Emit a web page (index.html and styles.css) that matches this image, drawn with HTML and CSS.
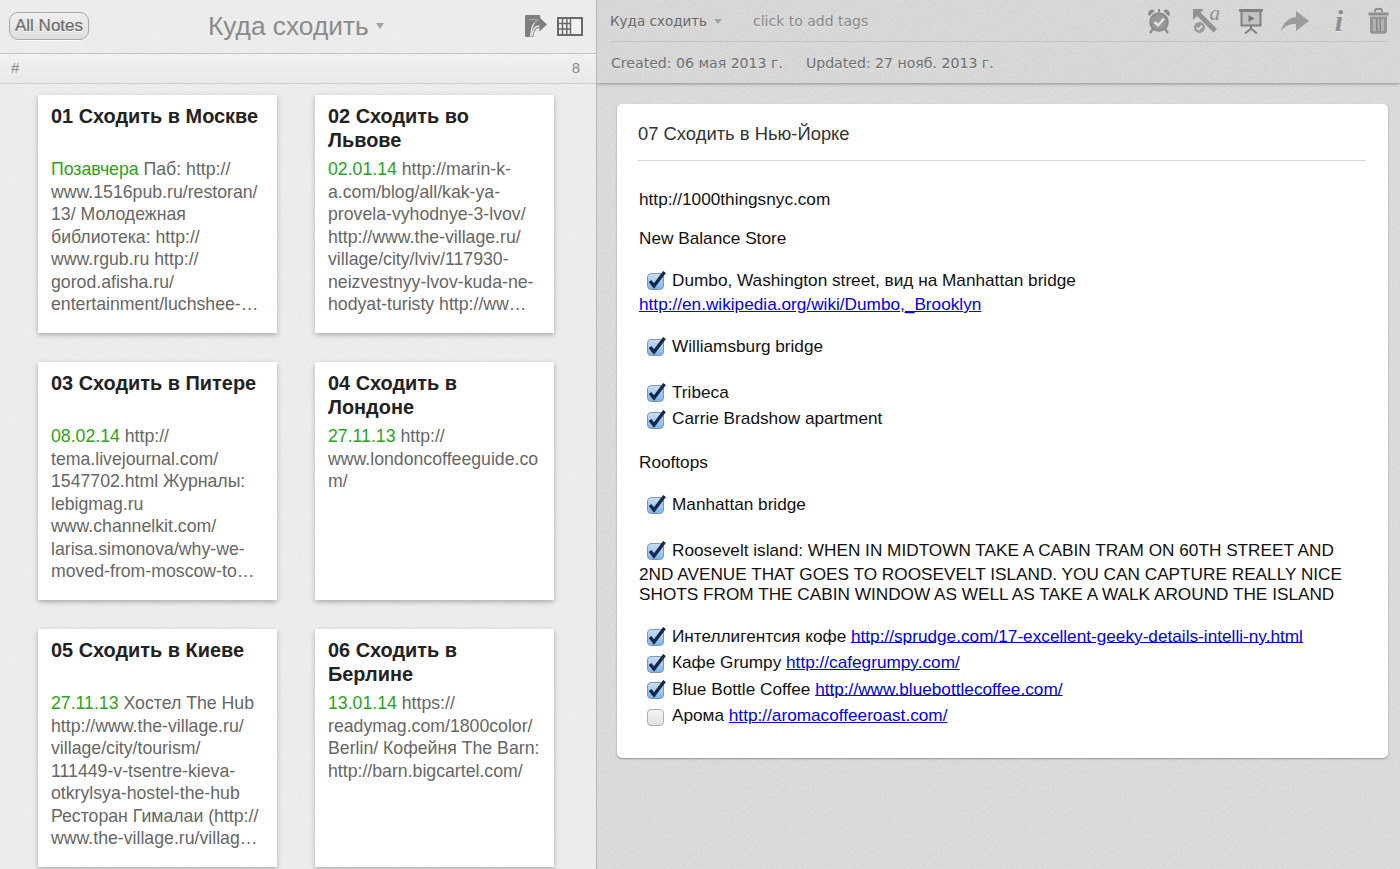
FILE: index.html
```html
<!DOCTYPE html>
<html lang="en">
<head>
    <meta charset="UTF-8">
    <title>Куда сходить</title>
    <link rel="stylesheet" href="styles.css">
</head>
<body>

<div class="app">
    <!-- Notes list -->
    <div class="list-pane">
        <div class="list-header">
            <button class="all-notes">All Notes</button>
            <div class="notebook-title">Куда сходить <span class="caret big"></span></div>
            <div class="list-icons">
                <svg width="23" height="22" viewBox="0 0 23 22"><path d="M1.500 0h12.500c.8 0 1.200.5 1.200 1.200V5c-4.500.5-8 3.500-9.200 9-.4 2.200-.7 4.500-.8 8H1.500C.6 22 0 21.400 0 20.500V1.500C0 .6.600 0 1.500 0z" fill="#7f7f7f"/><path d="M14.500 5V2.500L22 9.500l-7.500 7v-3.500c-3.500-.2-5.500 2.500-6 9h-2c0-9.500 3-16 8-17z" fill="#7f7f7f"/><path d="M4 4.500h8.500" stroke="#a8a8a8" stroke-width="1"/><path d="M7 21c.5-7 3-10 7.500-10" stroke="#ececec" stroke-width="1.500" fill="none"/></svg>
                <svg width="26" height="19" viewBox="0 0 26 19"><rect x="1" y="1" width="24" height="17" fill="#f1f1f1" stroke="#6a6a6a" stroke-width="2"/><path d="M1.500 6.500h12M1.500 12h12M5.500 1.500v16M9.800 1.500v16M13.500 1.500v16" stroke="#6a6a6a" stroke-width="1.500" fill="none"/></svg>
            </div>
        </div>
        <div class="list-subbar">
            <span>#</span>
            <span>8</span>
        </div>
        <div class="cards">
            <div class="card">
                <h2>01 Сходить в Москве</h2>
                <p><em>Позавчера</em> Паб: http://<br>www.1516pub.ru/restoran/<br>13/ Молодежная<br>библиотека: http://<br>www.rgub.ru http://<br>gorod.afisha.ru/<br>entertainment/luchshee-…</p>
            </div>
            <div class="card">
                <h2>02 Сходить во Львове</h2>
                <p><em>02.01.14</em> http://marin-k-<br>a.com/blog/all/kak-ya-<br>provela-vyhodnye-3-lvov/<br>http://www.the-village.ru/<br>village/city/lviv/117930-<br>neizvestnyy-lvov-kuda-ne-<br>hodyat-turisty http://ww…</p>
            </div>
            <div class="card">
                <h2>03 Сходить в Питере</h2>
                <p><em>08.02.14</em> http://<br>tema.livejournal.com/<br>1547702.html Журналы:<br>lebigmag.ru<br>www.channelkit.com/<br>larisa.simonova/why-we-<br>moved-from-moscow-to…</p>
            </div>
            <div class="card">
                <h2>04 Сходить в Лондоне</h2>
                <p><em>27.11.13</em> http://<br>www.londoncoffeeguide.co<br>m/</p>
            </div>
            <div class="card">
                <h2>05 Сходить в Киеве</h2>
                <p><em>27.11.13</em> Хостел The Hub<br>http://www.the-village.ru/<br>village/city/tourism/<br>111449-v-tsentre-kieva-<br>otkrylsya-hostel-the-hub<br>Ресторан Гималаи (http://<br>www.the-village.ru/villag…</p>
            </div>
            <div class="card">
                <h2>06 Сходить в Берлине</h2>
                <p><em>13.01.14</em> https://<br>readymag.com/1800color/<br>Berlin/ Кофейня The Barn:<br>http://barn.bigcartel.com/</p>
            </div>
        </div>
    </div>

    <!-- Note view -->
    <div class="note-pane">
        <div class="note-header">
            <div class="note-tools">
                <span class="notebook-name">Куда сходить <span class="caret"></span></span>
                <span class="tags">click to add tags</span>
                <div class="tool-icons">
                    <svg width="26" height="26" viewBox="0 0 26 26"><circle cx="13" cy="14" r="8.800" fill="#989898" stroke="#8a8a8a" stroke-width="2"/><path d="M2 6.500C2 3.500 4 1.500 7 1.500L8.500 3 3.500 8zM24 6.500c0-3-2-5-5-5L17.500 3l5 5z" fill="#8a8a8a"/><path d="M13 1v3" stroke="#8a8a8a" stroke-width="2"/><path d="M7 21l-3 4M19 21l3 4" stroke="#8a8a8a" stroke-width="2.200"/><path d="M8.500 14l3.500 3.500 6-7" stroke="#e2e2e2" stroke-width="2.500" fill="none"/></svg>
                    <span class="tool-move">
                        <svg width="26" height="26" viewBox="0 0 26 26"><path d="M1 1h11L8.500 4.500 25 21l-3.500 3.500L5 8 1 12z" fill="#939393"/><circle cx="7.500" cy="19.500" r="6" fill="#9c9c9c" stroke="#dadada"/><path d="M4.800 19.500l2 2 3.500-4" stroke="#e2e2e2" stroke-width="1.600" fill="none"/></svg>
                        <span class="a-glyph">a</span>
                    </span>
                    <svg class="tool-show" width="26" height="26" viewBox="0 0 26 26"><path d="M1 1h24v2.500H1z" fill="#808080"/><path d="M3.500 3h19v14.500h-19z" fill="#c2c2c2" stroke="#808080" stroke-width="2"/><path d="M10.500 7l6 3.500-6 3.500z" fill="#777"/><path d="M13 18v3M13 20.500l-6 5M13 20.500l6 5" stroke="#808080" stroke-width="2"/></svg>
                    <svg class="tool-share" width="29" height="20" viewBox="0 0 29 20"><path d="M0 20C2 12 7 7 15 6V0l13 10-13 10v-7C9 12.500 4 15 0 20z" fill="#9c9c9c"/></svg>
                    <span class="info">i</span>
                    <svg class="tool-trash" width="21" height="26" viewBox="0 0 21 26"><path d="M7 4V2.500C7 1.500 7.700 1 8.500 1h4c.8 0 1.500.5 1.500 1.500V4" fill="none" stroke="#8f8f8f" stroke-width="1.800"/><path d="M.5 4.500h20v3H.5z" fill="#8f8f8f"/><path d="M2 8.500h17V23c0 1.800-1 2.800-2.500 2.800h-12C3 25.800 2 24.800 2 23z" fill="#959595"/><rect x="5" y="11" width="11" height="12" fill="#b2b2b2"/><path d="M8.700 11v12M12.300 11v12" stroke="#858585" stroke-width="1.500"/></svg>
                </div>
            </div>
            <div class="note-dates">
                <span>Created: 06 мая 2013 г.</span>
                <span>Updated: 27 нояб. 2013 г.</span>
            </div>
        </div>

        <div class="note">
            <h1>07 Сходить в Нью-Йорке</h1>
            <div class="note-body">
                <p>http://1000thingsnyc.com</p>
                <p>New Balance Store</p>
                <p><span class="check on"></span>Dumbo, Washington street, вид на Manhattan bridge<br><a href="#">http://en.wikipedia.org/wiki/Dumbo,_Brooklyn</a></p>
                <p><span class="check on"></span>Williamsburg bridge</p>
                <p><span class="check on"></span>Tribeca<br><span class="check on"></span>Carrie Bradshow apartment</p>
                <p>Rooftops</p>
                <p><span class="check on"></span>Manhattan bridge</p>
                <p><span class="check on"></span>Roosevelt island: WHEN IN MIDTOWN TAKE A CABIN TRAM ON 60TH STREET AND 2ND AVENUE THAT GOES TO ROOSEVELT ISLAND. YOU CAN CAPTURE REALLY NICE SHOTS FROM THE CABIN WINDOW AS WELL AS TAKE A WALK AROUND THE ISLAND</p>
                <p><span class="check on"></span>Интеллигентсия кофе <a href="#">http://sprudge.com/17-excellent-geeky-details-intelli-ny.html</a><br><span class="check on"></span>Кафе Grumpy <a href="#">http://cafegrumpy.com/</a><br><span class="check on"></span>Blue Bottle Coffee <a href="#">http://www.bluebottlecoffee.com/</a><br><span class="check"></span>Арома <a href="#">http://aromacoffeeroast.com/</a></p>
            </div>
        </div>
    </div>
</div>

</body>
</html>
```

FILE: styles.css
```css
/* General Reset */
body {
    margin: 0;
    font-family: "Liberation Sans", Arial, sans-serif;
    background-color: #ececec;
    overflow: hidden;
}

.app {
    display: flex;
    height: 869px;
}

/* Paper speckle shared by both panes */
.list-pane,
.note-pane,
.note-header {
    background-image: url("data:image/svg+xml,%3Csvg xmlns='http://www.w3.org/2000/svg' width='240' height='240'%3E%3Cfilter id='n'%3E%3CfeTurbulence type='fractalNoise' baseFrequency='.7' numOctaves='2'/%3E%3CfeColorMatrix values='0 0 0 0 1 0 0 0 0 1 0 0 0 0 1 0 0 0 .7 -.33'/%3E%3C/filter%3E%3Crect width='240' height='240' filter='url(%23n)'/%3E%3C/svg%3E");
}

/* Notes list */
.list-pane {
    width: 596px;
    flex-shrink: 0;
    background-color: #ebebeb;
    overflow: hidden;
}

.list-header {
    height: 53px;
    position: relative;
    display: flex;
    align-items: center;
    justify-content: space-between;
    padding: 0 13px 0 9px;
    border-bottom: 1px solid #c6c6c6;
}

.all-notes {
    width: 80px;
    height: 28px;
    padding: 0;
    font-family: inherit;
    font-size: 17px;
    color: #6a6a6a;
    -webkit-text-stroke: 0.2px #6a6a6a;
    text-shadow: 0 1px 0 #fff;
    background: linear-gradient(#efefef, #dedede);
    border: 1px solid #a8a8a8;
    border-radius: 9px;
    box-shadow: 0 1px 0 rgba(255, 255, 255, 0.7);
    margin-bottom: 1px;
}

.notebook-title {
    position: absolute;
    left: 208px;
    top: 11px;
    font-size: 26.300px;
    color: #8b8b8b;
}

.caret {
    display: inline-block;
    width: 0;
    height: 0;
    border-left: 4.500px solid transparent;
    border-right: 4.500px solid transparent;
    border-top: 5px solid #a2a2a2;
    margin-left: 3px;
    vertical-align: 2px;
}

.caret.big {
    margin-left: 0;
    border-left-width: 4px;
    border-right-width: 4px;
    border-top-width: 6px;
    vertical-align: 6px;
}

.list-icons {
    display: flex;
    gap: 9px;
    align-items: center;
    margin-bottom: 1px;
}

.list-subbar {
    height: 30px;
    display: flex;
    justify-content: space-between;
    align-items: center;
    box-sizing: border-box;
    padding: 0 16px 2px 11px;
    font-size: 15px;
    color: #8c8c8c;
    background: linear-gradient(#f1f1f1, #e9e9e9);
    border-bottom: 1px solid #cdcdcd;
}

.cards {
    display: grid;
    grid-template-columns: 239px 239px;
    grid-auto-rows: 238px;
    gap: 29px 38px;
    padding: 11px 0 0 38px;
}

.card {
    background-color: #fff;
    padding: 9px 13px 0;
    box-shadow: 0 2px 5px rgba(0, 0, 0, 0.28);
    box-sizing: border-box;
}

.card h2 {
    margin: 0;
    height: 54px;
    font-size: 19.900px;
    line-height: 24px;
    font-weight: bold;
    color: #222;
}

.card p {
    margin: 0;
    font-size: 17.700px;
    line-height: 22.500px;
    color: #666;
    white-space: nowrap;
}

.card em {
    font-style: normal;
    color: #2aa31c;
}

/* Note view */
.note-pane {
    flex: 1;
    background-color: #d8d8d8;
    border-left: 1px solid #b5b5b5;
    overflow: hidden;
}

.note-header {
    height: 83px;
    padding-left: 14px;
    box-sizing: border-box;
    background-color: #d5d5d5;
    box-shadow: 0 1px 3px rgba(0, 0, 0, 0.35);
    font-family: "DejaVu Sans", sans-serif;
    color: #707070;
    text-shadow: 0 1px 0 rgba(255, 255, 255, 0.4);
}

.note-tools {
    height: 42px;
    display: flex;
    align-items: center;
    border-bottom: 1px solid #c4c4c4;
    box-sizing: border-box;
    margin-right: 11px;
    font-size: 14px;
}

.notebook-name {
    width: 143px;
    flex-shrink: 0;
    margin-left: -1px;
    font-size: 13.500px;
    color: #666;
}

.tags {
    color: #888;
}

.tool-icons {
    margin-left: auto;
    display: flex;
    align-items: center;
    gap: 18px;
}

.tool-move {
    position: relative;
    width: 26px;
    height: 26px;
    margin-left: 2px;
}

.a-glyph {
    position: absolute;
    right: -2px;
    top: -7px;
    font-family: "Liberation Serif", serif;
    font-style: italic;
    font-size: 21px;
    line-height: 24px;
    color: #8f8f8f;
    text-shadow: none;
}

.tool-show {
    margin-left: 2px;
}

.tool-share {
    margin-left: -1px;
}

.info {
    font-family: "Liberation Serif", serif;
    font-style: italic;
    font-weight: bold;
    font-size: 30px;
    line-height: 28px;
    color: #8f8f8f;
    width: 12px;
    text-align: center;
    margin-left: 5px;
}

.tool-trash {
    margin-left: 5px;
}

.note-dates {
    height: 41px;
    display: flex;
    align-items: center;
    gap: 23px;
    font-size: 14.100px;
    color: #6f6f6f;
}

.note {
    margin: 21px 12px 0 20px;
    padding: 0 22px 28px 21px;
    background-color: #fff;
    border-radius: 5px;
    box-shadow: 0 1px 2px rgba(0, 0, 0, 0.35);
}

.note h1 {
    margin: 0;
    height: 56px;
    line-height: 60px;
    font-size: 18.400px;
    font-weight: normal;
    color: #333;
    border-bottom: 1px solid #d4d4d4;
}

.note-body {
    padding-left: 1px;
    padding-top: 8px;
    font-size: 17.220px;
    line-height: 20px;
    color: #111;
}

.note-body p {
    margin: 19.500px 0 0;
}

.note-body a {
    color: #0000ee;
}

/* Checkboxes */
.check {
    display: inline-block;
    position: relative;
    box-sizing: border-box;
    width: 17px;
    height: 17px;
    margin: 5.500px 8px 4px;
    vertical-align: -9px;
    border: 1px solid #adadad;
    border-radius: 4px;
    background: linear-gradient(#f3f3f3, #e1e1e1);
}

.check.on {
    border-color: #8295ad;
    background: linear-gradient(#c9dcf2, #a9ccf2 50%, #7db4ee);
}

.check.on::after {
    content: "";
    position: absolute;
    left: 0;
    top: -3px;
    width: 18px;
    height: 18px;
    background: url("data:image/svg+xml,%3Csvg xmlns='http://www.w3.org/2000/svg' width='18' height='18'%3E%3Cpath d='M2 10l4 5L16.500 1' stroke='%2314294b' stroke-width='3.400' fill='none'/%3E%3C/svg%3E") no-repeat;
}
```
